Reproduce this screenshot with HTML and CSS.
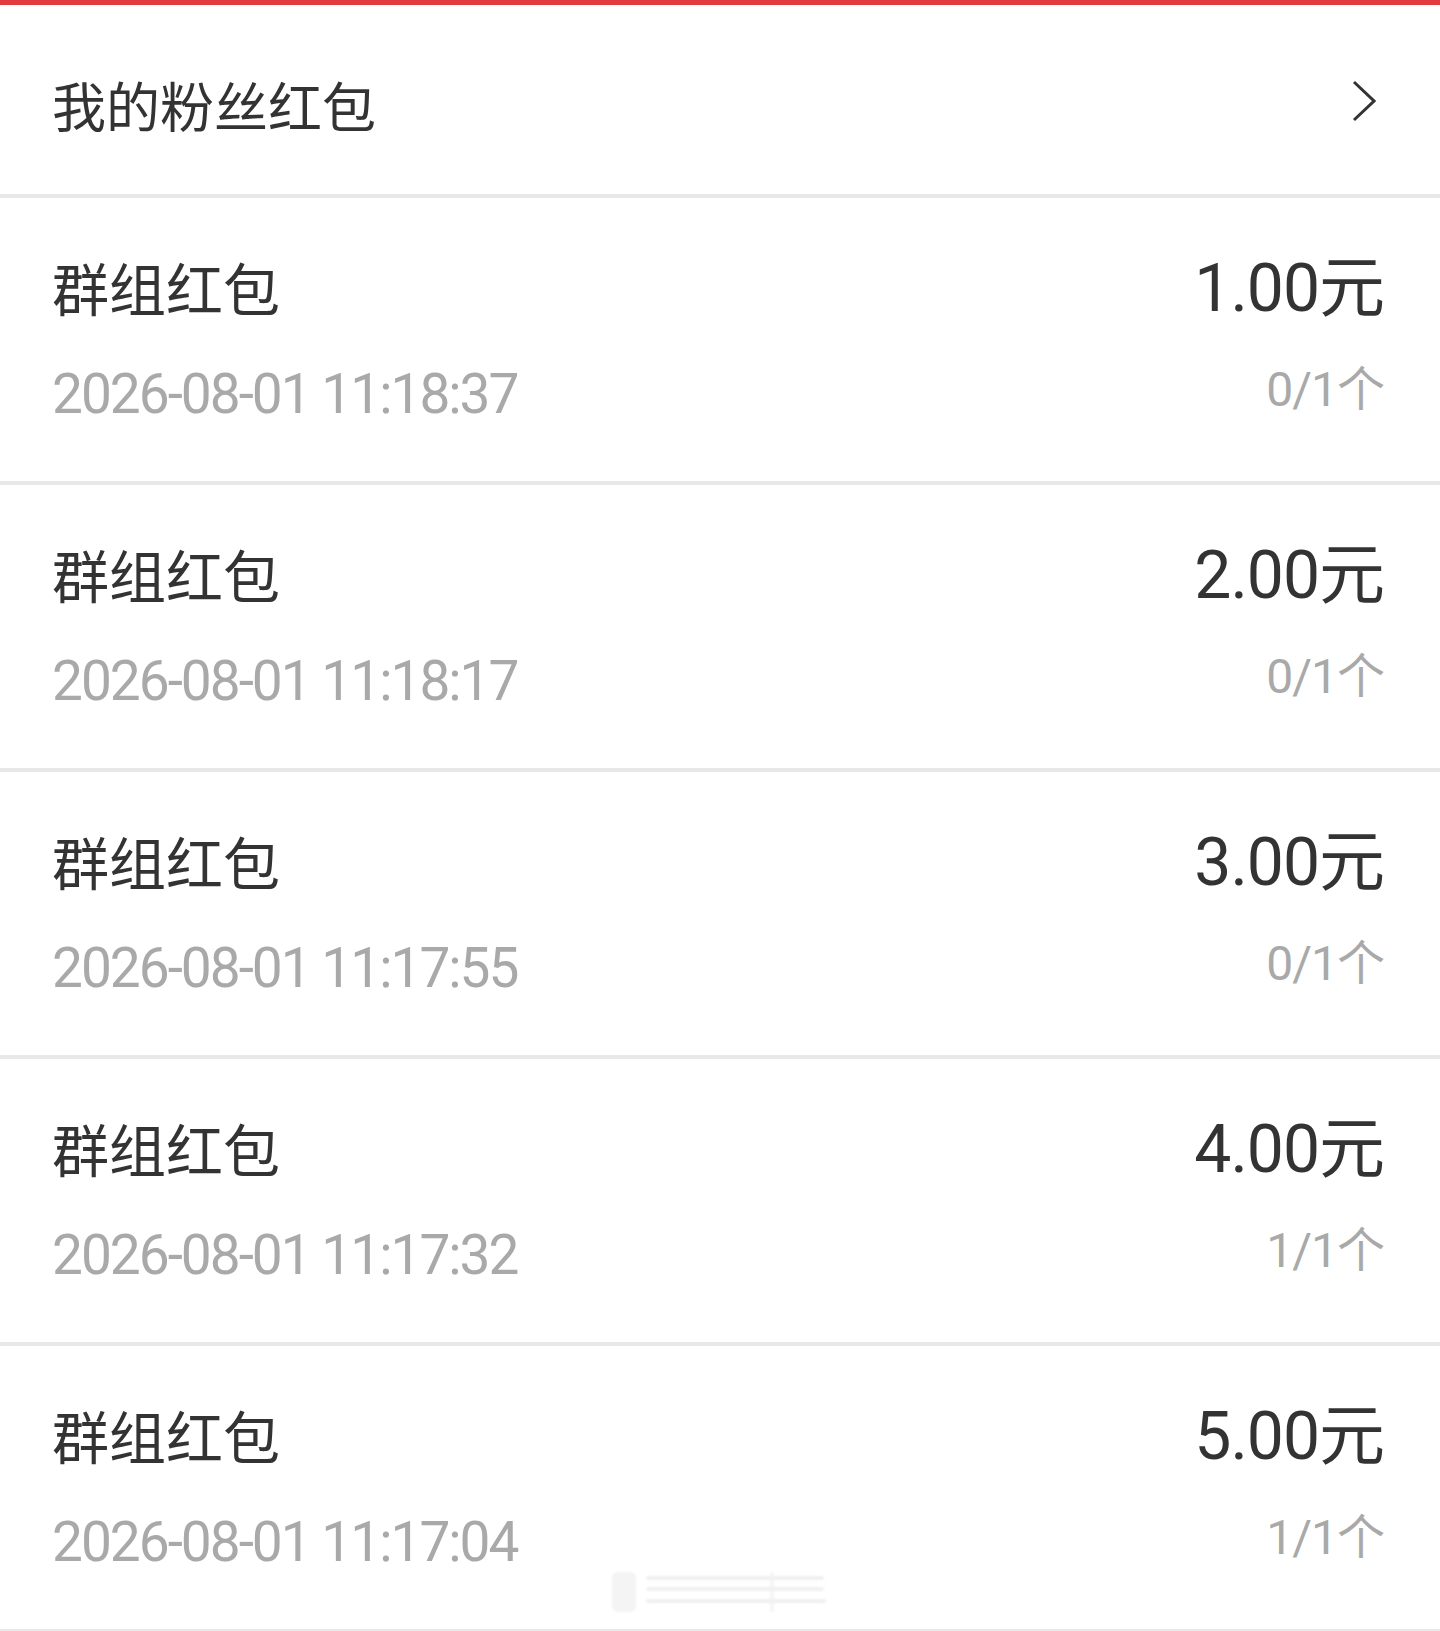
FILE: index.html
```html
<!DOCTYPE html>
<html lang="zh-CN">
  <head>
    <meta charset="UTF-8" />
    <meta name="viewport" content="width=device-width, initial-scale=1" />
    <title>我的粉丝红包</title>
    <link rel="stylesheet" href="styles.css">
  </head>
  <body>
    <div class="topbar"></div>

    <div class="header">
      <span class="header-title">我的粉丝红包</span>
      <svg class="chevron" width="24" height="42" viewBox="0 0 24 42">
        <polyline points="2,2 22,21 2,40" fill="none" stroke="#333" stroke-width="3" />
      </svg>
    </div>

    <ul class="list">
      <li class="row">
        <div class="col">
          <span class="title">群组红包</span>
          <span class="date">2026-08-01 11:18:37</span>
        </div>
        <div class="col right">
          <span class="amount">1.00元</span>
          <span class="count">0/1个</span>
        </div>
      </li>
      <li class="row">
        <div class="col">
          <span class="title">群组红包</span>
          <span class="date">2026-08-01 11:18:17</span>
        </div>
        <div class="col right">
          <span class="amount">2.00元</span>
          <span class="count">0/1个</span>
        </div>
      </li>
      <li class="row">
        <div class="col">
          <span class="title">群组红包</span>
          <span class="date">2026-08-01 11:17:55</span>
        </div>
        <div class="col right">
          <span class="amount">3.00元</span>
          <span class="count">0/1个</span>
        </div>
      </li>
      <li class="row">
        <div class="col">
          <span class="title">群组红包</span>
          <span class="date">2026-08-01 11:17:32</span>
        </div>
        <div class="col right">
          <span class="amount">4.00元</span>
          <span class="count">1/1个</span>
        </div>
      </li>
      <li class="row">
        <div class="col">
          <span class="title">群组红包</span>
          <span class="date">2026-08-01 11:17:04</span>
        </div>
        <div class="col right">
          <span class="amount">5.00元</span>
          <span class="count">1/1个</span>
        </div>
      </li>
    </ul>

    <svg class="watermark" width="230" height="46" viewBox="0 0 230 46">
      <rect x="12" y="4" width="24" height="40" rx="6" fill="#f4f4f4" />
      <rect x="170" y="4" width="4" height="40" fill="#f6f6f6" />
      <line x1="48" y1="10" x2="222" y2="10" stroke="#f0f0f0" stroke-width="4" stroke-linecap="round" />
      <line x1="48" y1="21" x2="222" y2="21" stroke="#f0f0f0" stroke-width="4" stroke-linecap="round" />
      <line x1="48" y1="33" x2="224" y2="33" stroke="#f0f0f0" stroke-width="4" stroke-linecap="round" />
    </svg>
  </body>
</html>
```

FILE: styles.css
```css
* {
  margin: 0;
  padding: 0;
  box-sizing: border-box;
}
body {
  background: #fff;
  font-family: Roboto, "Noto Sans CJK SC", sans-serif;
  color: #333;
  width: 1440px;
  position: relative;
}
.topbar {
  height: 5px;
  background: #e1393f;
}
.header {
  height: 193px;
  display: flex;
  align-items: center;
  justify-content: space-between;
  padding: 0 64px 0 52px;
  border-bottom: 4px solid #e8e8e8;
}
.header-title {
  font-size: 54px;
  line-height: 64px;
  padding-top: 20px;
}
.chevron {
  display: block;
  margin-top: 2px;
}
.list {
  list-style: none;
}
.row {
  height: 287px;
  display: flex;
  justify-content: space-between;
  padding: 62px 56px 0 52px;
  border-bottom: 4px solid #e8e8e8;
}
.col {
  display: flex;
  flex-direction: column;
  gap: 38px;
}
.right {
  align-items: flex-end;
  margin-top: -3px;
  gap: 41px;
}
.title {
  font-size: 57px;
  line-height: 64px;
}
.date {
  font-size: 55px;
  line-height: 64px;
  letter-spacing: -2px;
  color: #a9a9a9;
}
.amount {
  font-size: 66px;
  line-height: 64px;
  letter-spacing: -1px;
}
.count {
  font-size: 48px;
  line-height: 56px;
  letter-spacing: -1px;
  color: #a9a9a9;
}
.watermark {
  position: absolute;
  left: 600px;
  top: 1568px;
  filter: blur(1px);
}
```
